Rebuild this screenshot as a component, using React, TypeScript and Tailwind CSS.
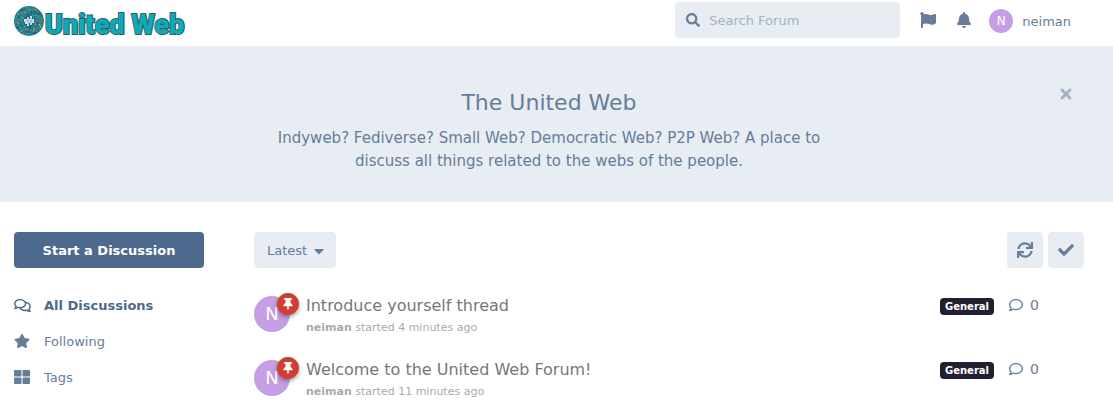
import React, { useState } from 'react';
import {
  FaBell,
  FaCaretDown,
  FaCheck,
  FaFlag,
  FaRegComment,
  FaRegComments,
  FaSearch,
  FaStar,
  FaSync,
  FaThLarge,
  FaThumbtack,
  FaTimes,
} from 'react-icons/fa';

const discussions = [
  { id: 1, title: 'Introduce yourself thread', user: 'neiman', time: '4 minutes ago', tag: 'General', replies: 0 },
  { id: 2, title: 'Welcome to the United Web Forum!', user: 'neiman', time: '11 minutes ago', tag: 'General', replies: 0 },
];

const navItems = [
  { label: 'All Discussions', icon: FaRegComments, active: true },
  { label: 'Following', icon: FaStar, active: false },
  { label: 'Tags', icon: FaThLarge, active: false },
];

const dotColors = ['#e0633c', '#3fb8c4', '#1c4f63', '#d8a657', '#2aa3a8', '#7a4a6b', '#2c8f9c'];

// rings of small coloured dots around the globe
const dots = [7, 9, 11, 13].flatMap((radius, ring) =>
  Array.from({ length: 14 + ring * 5 }, (_, i) => {
    const angle = (i / (14 + ring * 5)) * Math.PI * 2 + ring * 0.3;
    return {
      x: 15 + Math.cos(angle) * radius,
      y: 15 + Math.sin(angle) * radius,
      fill: dotColors[(i * 3 + ring * 2) % dotColors.length],
    };
  })
);

const Logo = () => (
  <a href="#" className="flex h-9 shrink-0 gap-px">
    <svg width="30" height="30" viewBox="0 0 30 30" className="mt-1 block" aria-hidden="true">
      <circle cx="15" cy="15" r="15" fill="#1d7f8c" />
      {dots.map((dot, i) => (
        <circle key={i} cx={dot.x} cy={dot.y} r="0.8" fill={dot.fill} />
      ))}
      <circle cx="15" cy="15" r="5.6" fill="#245f7c" />
      <path d="M10 13h3v-2h2v2h1v-3h2v3h2v4h-2v2h-2v-2h-1v3h-2v-2h-2v-2h-1z" fill="#d5e8f0" />
      <path d="M14 11v8M17 11v8M11 15h8" stroke="#5b8fab" strokeWidth="0.5" fill="none" />
    </svg>
    <span className="font-['Roboto',sans-serif] text-[27px] leading-[46px] font-black whitespace-nowrap text-[#0fa9b8] [-webkit-text-stroke:2px_#2a6168] [paint-order:stroke]">
      United Web
    </span>
  </a>
);

export default function App() {
  const [showHero, setShowHero] = useState(true);
  const [search, setSearch] = useState('');

  return (
    <div className="min-h-screen bg-white font-['DejaVu_Sans',sans-serif] text-[13px] leading-[21px] text-[#667d99]">
      {/* Header */}
      <header className="flex items-center justify-between pt-0.5 pb-2 pl-3.5 pr-[29px]">
        <Logo />
        <div className="flex items-center">
          <label className="flex h-9 w-[225px] items-center gap-[9px] rounded bg-[#e8ecf3] px-[11px]">
            <FaSearch className="size-3.5 shrink-0" />
            <input
              type="search"
              aria-label="Search Forum"
              placeholder="Search Forum"
              value={search}
              onChange={(e) => setSearch(e.target.value)}
              className="h-9 w-full min-w-0 bg-transparent pt-px outline-none placeholder:text-[#a3b1c5]"
            />
          </label>
          <button aria-label="Flags" className="ml-2.5 flex size-9 items-center justify-center">
            <FaFlag className="size-4" />
          </button>
          <button aria-label="Notifications" className="flex size-9 items-center justify-center">
            <FaBell className="size-4" />
          </button>
          <button className="ml-[7px] flex items-center gap-[9px] pt-0.5 pr-[13px]">
            <span className="flex size-6 items-center justify-center rounded-full bg-[#c59fe6] text-xs text-white">N</span>
            neiman
          </button>
        </div>
      </header>

      {/* Welcome banner */}
      {showHero && (
        <section className="relative bg-[#e8ecf3] pt-10 pb-[29px] pl-3.5 pr-[29px] text-center">
          <button
            aria-label="Hide welcome banner"
            onClick={() => setShowHero(false)}
            className="absolute top-[30px] right-[29px] flex size-9 items-center justify-center text-[#a3b1c5]"
          >
            <FaTimes className="size-4" />
          </button>
          <h1 className="text-[22px] leading-[34px]">The United Web</h1>
          <p className="mx-auto mt-[7px] max-w-[560px] text-[15px] leading-[23px]">
            Indyweb? Fediverse? Small Web? Democratic Web? P2P Web? A place to discuss all things related to the webs of
            the people.
          </p>
        </section>
      )}

      <div className="flex gap-[50px] pt-[30px] pl-3.5 pr-[29px]">
        {/* Sidebar */}
        <aside className="w-[190px] shrink-0">
          <button className="h-9 w-full rounded bg-[#4d698e] pt-px font-bold text-white">Start a Discussion</button>
          <nav className="mt-[19px]">
            {navItems.map((item) => (
              <a
                key={item.label}
                href="#"
                className={`flex h-9 items-center gap-[13px] ${item.active ? 'font-bold text-[#4d698e]' : ''}`}
              >
                <span className="flex w-[17px] shrink-0">
                  <item.icon className={item.active ? 'h-[15px] w-[17px]' : 'size-4'} />
                </span>
                {item.label}
              </a>
            ))}
          </nav>
        </aside>

        {/* Discussion list */}
        <main className="min-w-0 flex-1">
          <div className="flex items-center justify-between">
            <button className="flex h-9 items-center gap-[7px] rounded bg-[#e8ecf3] pt-px pr-3 pl-[13px]">
              Latest
              <FaCaretDown className="h-4 w-2.5" />
            </button>
            <div className="flex gap-[5px]">
              <button aria-label="Refresh" className="flex size-9 items-center justify-center rounded bg-[#e8ecf3]">
                <FaSync className="size-4" />
              </button>
              <button aria-label="Mark all as read" className="flex size-9 items-center justify-center rounded bg-[#e8ecf3]">
                <FaCheck className="size-4" />
              </button>
            </div>
          </div>

          <ul className="mt-4">
            {discussions.map((d) => (
              <li key={d.id} className="flex h-16 items-start pt-2.5">
                <div className="relative mt-0.5 mr-4 flex size-9 shrink-0 items-center justify-center rounded-full bg-[#c59fe6] text-lg text-white">
                  N
                  <span className="absolute -top-[3px] -right-[9px] flex size-[22px] items-center justify-center rounded-full bg-[#d13e32] shadow-[0_2px_4px_rgba(0,0,0,0.35)]">
                    <FaThumbtack className="size-3" />
                  </span>
                </div>
                <a href="#" className="min-w-0 flex-1">
                  <h3 className="truncate text-base leading-6 text-[#777777]">{d.title}</h3>
                  <p className="text-[11px] leading-5 text-[#aaaaaa]">
                    <span className="font-bold">{d.user}</span> started {d.time}
                  </p>
                </a>
                <span className="mt-1 mr-[15px] rounded bg-[#231f33] px-[5px] text-[10px] leading-[17px] font-bold text-white">
                  {d.tag}
                </span>
                <span className="flex h-[22px] w-[75px] items-center gap-[7px] text-sm">
                  <FaRegComment className="size-3.5" />
                  {d.replies}
                </span>
              </li>
            ))}
          </ul>
        </main>
      </div>
    </div>
  );
}
